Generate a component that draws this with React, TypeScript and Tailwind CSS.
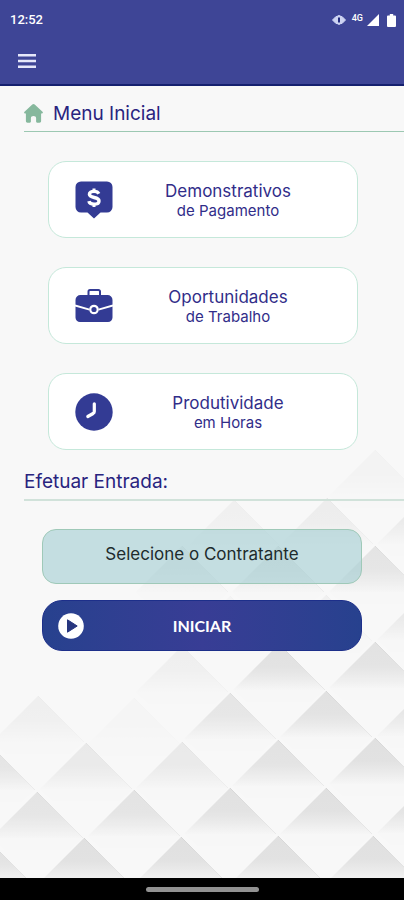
import React, { useState } from "react";

interface MenuCardProps {
  title: string;
  subtitle: string;
  icon: React.ReactNode;
}

// [apex x, apex y, opacity] of every raised tile of the backdrop
const tiles: [number, number, number][] = [
  [375, 10, 0.2],
  [327, 58, 0.45],
  [234, 60, 0.3],
  [423, 58, 0.55],
  [182, 106, 0.5],
  [278, 106, 0.7],
  [375, 106, 0.8],
  [230, 156, 0.15],
  [326, 155, 0.3],
  [423, 154, 0.6],
  [182, 206, 0.35],
  [279, 204, 0.95],
  [375, 202, 0.9],
  [38, 256, 0.35],
  [134, 258, 0.12],
  [230, 253, 0.75],
  [326, 251, 0.95],
  [423, 250, 0.75],
  [-11, 304, 0.8],
  [86, 303, 0.6],
  [182, 302, 0.6],
  [278, 300, 0.9],
  [375, 298, 1],
  [37, 352, 0.8],
  [134, 350, 0.85],
  [230, 348, 0.95],
  [326, 348, 1],
  [423, 347, 0.9],
  [-13, 399, 0.9],
  [84, 398, 1],
  [181, 397, 1],
  [278, 396, 1],
  [373, 396, 1],
];

const Backdrop = () => (
  <svg
    className="absolute inset-x-0 bottom-0 -z-10 h-[438px] w-full"
    viewBox="0 0 404 438"
    preserveAspectRatio="xMaxYMax slice"
    aria-hidden="true"
  >
    <defs>
      <linearGradient id="tile" x1="0" y1="0" x2="0" y2="1">
        <stop offset="0" stopColor="#e0e0e0" />
        <stop offset="0.5" stopColor="#e2e2e2" />
        <stop offset="0.75" stopColor="#ebebeb" />
        <stop offset="1" stopColor="#f6f6f6" />
      </linearGradient>
      <linearGradient id="edge" x1="0" y1="0" x2="0" y2="1">
        <stop offset="0" stopColor="#d6d6d6" />
        <stop offset="1" stopColor="#e9e9e9" />
      </linearGradient>
    </defs>
    {tiles.map(([x, y, opacity]) => (
      <g key={`${x}-${y}`} opacity={opacity}>
        <path d={`M${x} ${y}l46 46h-92z`} fill="url(#tile)" />
        <path d={`M${x - 46} ${y + 46}l14 12h64l14-12z`} fill="#f7f7f7" />
        <path d={`M${x} ${y}l46 46`} fill="none" stroke="url(#edge)" />
      </g>
    ))}
  </svg>
);

const HomeIcon = () => (
  <svg className="h-[19px] w-[19px]" viewBox="0 0 19 19" fill="#86b89d" aria-hidden="true">
    <path d="M8.3.6a1.8 1.8 0 0 1 2.4 0l7.8 7.1c.8.8.4 1.8-.6 1.8h-.8v7.6c0 1-.6 1.6-1.6 1.6h-2.3c-.7 0-1.1-.4-1.1-1.1v-3.4c0-1.4-1-2.2-2.6-2.2s-2.6.8-2.6 2.2v3.4c0 .7-.4 1.1-1.1 1.1H3.5c-1 0-1.6-.6-1.6-1.6V9.5h-.8C.1 9.5-.3 8.5.5 7.7z" />
  </svg>
);

const PaymentIcon = () => (
  <svg className="h-[38px] w-[38px]" viewBox="0 0 38 38" aria-hidden="true">
    <path d="M6 .5h26a5.500 5.500 0 0 1 5.500 5.500v20a5.500 5.500 0 0 1-5.500 5.500h-6.500L19 37.500l-6.500-6H6A5.500 5.500 0 0 1 .5 26V6A5.500 5.500 0 0 1 6 .5z" fill="#333b94" />
    <path d="M23.800 12.800c-.7-1.600-2.400-2.400-4.800-2.400-2.800 0-4.600 1.100-4.600 2.900 0 4.300 9.600 2.100 9.600 6.600 0 2-2 3.200-5 3.200-2.800 0-4.700-1.100-5.100-3" fill="none" stroke="#fff" strokeWidth="3.400" />
    <path d="M19 7.500v3M19 23v3" stroke="#fff" strokeWidth="3" />
  </svg>
);

const BriefcaseIcon = () => (
  <svg className="h-[38px] w-[38px]" viewBox="0 0 38 38" aria-hidden="true">
    <path d="M13.500 8V4.500a1.500 1.500 0 0 1 1.500-1.500h8.500a1.500 1.500 0 0 1 1.500 1.500V8" fill="none" stroke="#333b94" strokeWidth="2" />
    <path d="M5.500 8h27A5 5 0 0 1 37.500 13v17.500a4.500 4.500 0 0 1-4.500 4.500H5A4.500 4.500 0 0 1 .5 30.500V13A5 5 0 0 1 5.500 8z" fill="#333b94" />
    <path d="M0 18.500l14.500 4.200M38 18.500l-14.500 4.200" stroke="#fff" strokeWidth="1.900" />
    <circle cx="19" cy="22.500" r="3.700" fill="#333b94" stroke="#fff" strokeWidth="2.200" />
  </svg>
);

const ClockIcon = () => (
  <svg className="h-[38px] w-[38px]" viewBox="0 0 38 38" aria-hidden="true">
    <circle cx="19" cy="19" r="18.700" fill="#333b94" />
    <path d="M19.300 10.800v7.700c0 1-.4 1.500-1.200 2l-5.300 3" fill="none" stroke="#fff" strokeWidth="3.200" strokeLinecap="round" />
  </svg>
);

const MenuCard: React.FC<MenuCardProps> = ({ title, subtitle, icon }) => {
  return (
    <button
      type="button"
      className="flex h-[77px] w-full items-center rounded-[18px] border border-[#c5e8da] bg-white pr-3.5 pl-[26px] text-[#312d89]"
    >
      {icon}
      <span className="flex flex-1 flex-col items-center pt-0.5">
        <span className="text-[17px] leading-5">{title}</span>
        <span className="text-[15px] leading-5">{subtitle}</span>
      </span>
    </button>
  );
};

const App = () => {
  const [contractor, setContractor] = useState("");

  return (
    <div className="flex min-h-screen flex-col bg-[#f8f8f8] font-['Inter',sans-serif]">
      <header className="border-b-2 border-[#15206f] bg-[#3e4596] text-white">
        <div className="flex h-10 items-center justify-between pr-2 pl-2.5">
          <span className="font-['Roboto',sans-serif] text-[13px] font-medium">12:52</span>
          <div className="flex items-center gap-1">
            <svg className="h-3 w-[14px]" viewBox="0 0 14 12" aria-hidden="true">
              <path d="M.5 6L4 2.500h6L13.500 6 10 9.500H4z" fill="#cdd3f2" stroke="#cdd3f2" strokeLinejoin="round" />
              <ellipse cx="7" cy="6" rx="3" ry="5" fill="#cdd3f2" />
              <path d="M7 3.500v5" stroke="#242c80" strokeWidth="2" />
            </svg>
            <span className="pb-1 pl-0.5 font-['Roboto',sans-serif] text-[9px] leading-3 font-medium">4G</span>
            <svg className="h-3 w-3" viewBox="0 0 12 12" fill="#fff" aria-hidden="true">
              <path d="M12 0v12H0z" />
            </svg>
            <svg className="ml-1 h-[13px] w-[9px]" viewBox="0 0 9 13" fill="#fff" aria-hidden="true">
              <path d="M2.800 0h3.400v1.500H8a1 1 0 0 1 1 1V12a1 1 0 0 1-1 1H1a1 1 0 0 1-1-1V2.500a1 1 0 0 1 1-1h1.800z" />
            </svg>
          </div>
        </div>
        <div className="flex h-11 items-center px-[18px] pb-0.5">
          <button type="button" aria-label="Menu">
            <svg className="h-[14px] w-[18px]" viewBox="0 0 18 14" fill="#e6e8fa" aria-hidden="true">
              <path d="M0 0h18v2.600H0zM0 5.700h18v2.600H0zM0 11.400h18V14H0z" />
            </svg>
          </button>
        </div>
      </header>

      <main className="relative isolate flex-1">
        <Backdrop />
        <div className="ml-6 flex h-[46px] items-center gap-2.5 border-b border-[#9cc8b2] pt-2.5">
          <HomeIcon />
          <h1 className="text-[19px] leading-6 text-[#29247f]">Menu Inicial</h1>
        </div>

        <nav className="flex flex-col gap-[29px] pt-[29px] pr-[46px] pl-12">
          <MenuCard title="Demonstrativos" subtitle="de Pagamento" icon={<PaymentIcon />} />
          <MenuCard title="Oportunidades" subtitle="de Trabalho" icon={<BriefcaseIcon />} />
          <MenuCard title="Produtividade" subtitle="em Horas" icon={<ClockIcon />} />
        </nav>

        <div className="mt-5 ml-6 border-b-2 border-[#d1e2da] pb-[5px]">
          <h2 className="text-[19px] leading-6 text-[#29247f]">Efetuar Entrada:</h2>
        </div>

        <form className="flex flex-col gap-4 px-[42px] pt-7" onSubmit={(e) => e.preventDefault()}>
          <select
            aria-label="Contratante"
            className="h-[55px] w-full appearance-none rounded-[14px] border border-[#9fc9b8] bg-[#a2cdd2]/60 pb-1 text-center text-[17px] text-[#202b2d] [text-align-last:center]"
            value={contractor}
            onChange={(e) => setContractor(e.target.value)}
          >
            <option value="">Selecione o Contratante</option>
          </select>
          <button
            type="submit"
            className="relative h-[51px] w-full rounded-[20px] border border-[#1d2f8a] bg-linear-to-r from-[#27418e] via-[#383d95] to-[#27418e] font-['Lato',sans-serif] text-base font-bold text-white"
          >
            <svg className="absolute top-3 left-[15px] h-[26px] w-[26px]" viewBox="0 0 26 26" aria-hidden="true">
              <circle cx="13" cy="13" r="12.800" fill="#fff" />
              <path d="M9.500 6.800v12.400l9.700-6.200z" fill="#27367f" stroke="#27367f" strokeLinejoin="round" />
            </svg>
            INICIAR
          </button>
        </form>
      </main>

      <footer className="flex h-[22px] items-center justify-center bg-black">
        <div className="h-[5px] w-[113px] rounded-full bg-[#929292]" />
      </footer>
    </div>
  );
};

export default App;
